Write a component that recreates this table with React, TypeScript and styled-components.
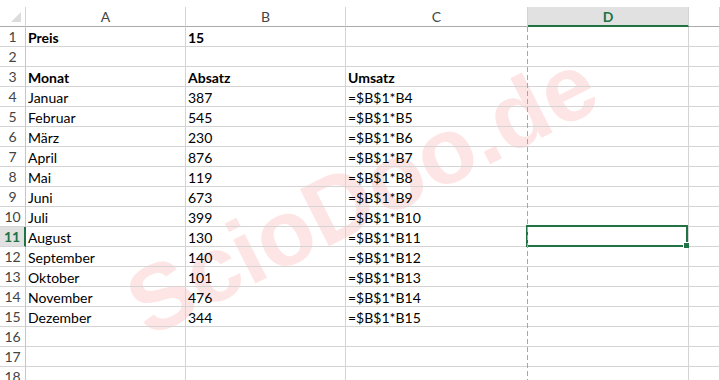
import React from 'react';
import styled, { createGlobalStyle } from 'styled-components';

const GlobalStyle = createGlobalStyle`
  html, body { margin: 0; padding: 0; background: #fff; }
  body {
    width: 720px;
    height: 380px;
    overflow: hidden;
    font-family: Lato, "Liberation Sans", sans-serif;
  }
`;

const GREEN = '#217346';
const GRID = '#d4d4d4';

const Wrap = styled.div`
  position: relative;
  padding-top: 7px;
  height: 373px;
  overflow: hidden;
`;

// watermark sits behind the grid, grid cells are transparent
const Watermark = styled.div`
  position: absolute;
  left: 362px;
  top: 194px;
  z-index: 0;
  transform: translate(-50%, -50%) rotate(-27deg);
  font-family: "Liberation Sans", Arial, sans-serif;
  font-weight: 700;
  font-size: 93px;
  color: #fee5e5;
  white-space: nowrap;
  pointer-events: none;
`;

const PageBreak = styled.div`
  position: absolute;
  left: 527px;
  top: 27px;
  bottom: 0;
  width: 1px;
  z-index: 2;
  background: repeating-linear-gradient(to bottom, #a6a6a6 0 5px, transparent 5px 8px);
`;

const Sheet = styled.div`
  position: relative;
  z-index: 1;
  display: grid;
  grid-template-columns: 26px 160px 160px 182px 161px 1fr;
  grid-auto-rows: 20px;
`;

const Corner = styled.div`
  box-sizing: border-box;
  border-right: 1px solid ${GRID};
  border-bottom: 1px solid #ababab;
  display: flex;
  align-items: flex-end;
  justify-content: flex-end;
  padding: 0 3px 3px 0;
`;

const ColHead = styled.div<{ $active?: boolean }>`
  box-sizing: border-box;
  display: flex;
  align-items: center;
  justify-content: center;
  font-size: 14px;
  color: ${(p) => (p.$active ? GREEN : '#444')};
  font-weight: ${(p) => (p.$active ? 700 : 400)};
  background: ${(p) => (p.$active ? '#e1e1e1' : 'transparent')};
  border-right: 1px solid ${GRID};
  border-bottom: ${(p) => (p.$active ? `2px solid ${GREEN}` : '1px solid #ababab')};
`;

const RowHead = styled.div<{ $active?: boolean }>`
  box-sizing: border-box;
  display: flex;
  align-items: center;
  justify-content: center;
  font-size: 14px;
  color: ${(p) => (p.$active ? GREEN : '#444')};
  font-weight: ${(p) => (p.$active ? 700 : 400)};
  background: ${(p) => (p.$active ? '#e1e1e1' : 'transparent')};
  border-right: ${(p) => (p.$active ? `2px solid ${GREEN}` : '1px solid #c6c6c6')};
  border-bottom: 1px solid ${GRID};
`;

const Cell = styled.div<{ $bold?: boolean; $noRight?: boolean }>`
  box-sizing: border-box;
  position: relative;
  display: flex;
  align-items: center;
  padding: 1px 0 0 2px;
  font-size: 14px;
  color: #000;
  font-weight: ${(p) => (p.$bold ? 700 : 400)};
  white-space: nowrap;
  border-right: ${(p) => (p.$noRight ? 'none' : `1px solid ${GRID}`)};
  border-bottom: 1px solid ${GRID};
`;

const Selection = styled.div`
  position: absolute;
  left: -2px;
  top: -2px;
  right: 0;
  bottom: -1px;
  border: 2px solid ${GREEN};
  z-index: 3;
`;

const Handle = styled.div`
  position: absolute;
  right: -3px;
  bottom: -3px;
  width: 5px;
  height: 5px;
  background: ${GREEN};
  border: 1px solid #fff;
  border-right: none;
  border-bottom: none;
`;

const months: [string, number][] = [
  ['Januar', 387],
  ['Februar', 545],
  ['März', 230],
  ['April', 876],
  ['Mai', 119],
  ['Juni', 673],
  ['Juli', 399],
  ['August', 130],
  ['September', 140],
  ['Oktober', 101],
  ['November', 476],
  ['Dezember', 344],
];

type RowData = { a: string; b: string; c: string; bold?: boolean };

const rows: RowData[] = [
  { a: 'Preis', b: '15', c: '', bold: true },
  { a: '', b: '', c: '' },
  { a: 'Monat', b: 'Absatz', c: 'Umsatz', bold: true },
  ...months.map(([m, n], i) => ({ a: m, b: String(n), c: `=$B$1*B${i + 4}` })),
  { a: '', b: '', c: '' },
  { a: '', b: '', c: '' },
  { a: '', b: '', c: '' },
];

const ACTIVE_ROW = 11;

export default function App() {
  return (
    <>
      <GlobalStyle />
      <Wrap>
        <Watermark>ScioDoo.de</Watermark>
        <PageBreak />
        <Sheet>
          <Corner>
            <svg width="11" height="11" viewBox="0 0 11 11">
              <polygon points="10,0 10,10 0,10" fill="#dcdcdc" />
            </svg>
          </Corner>
          {['A', 'B', 'C', 'D', 'E'].map((c) => (
            <ColHead key={c} $active={c === 'D'}>
              {c === 'E' ? '' : c}
            </ColHead>
          ))}
          {rows.map((r, i) => {
            const n = i + 1;
            return (
              <React.Fragment key={n}>
                <RowHead $active={n === ACTIVE_ROW}>{n}</RowHead>
                <Cell $bold={r.bold}>{r.a}</Cell>
                <Cell $bold={r.bold}>{r.b}</Cell>
                <Cell $bold={r.bold} $noRight>{r.c}</Cell>
                <Cell>
                  {n === ACTIVE_ROW && (
                    <Selection>
                      <Handle />
                    </Selection>
                  )}
                </Cell>
                <Cell />
              </React.Fragment>
            );
          })}
        </Sheet>
      </Wrap>
    </>
  );
}
